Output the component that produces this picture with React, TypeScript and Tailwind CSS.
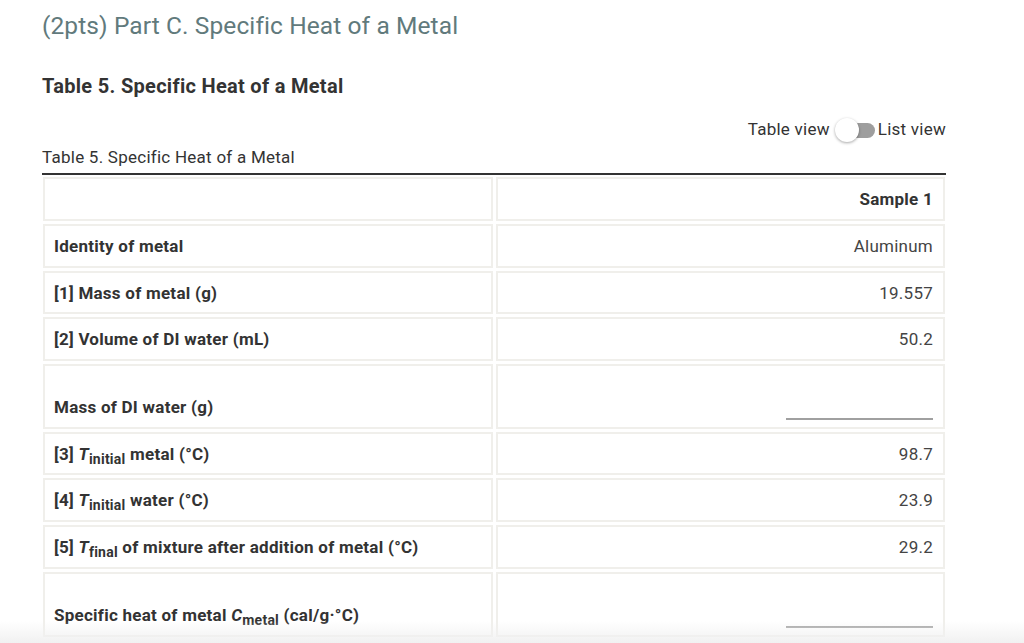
import React from "react";

type Row = {
  label: React.ReactNode;
  value?: string;
  input?: boolean;
  tall?: boolean;
};

function Sub({ sym, sub }: { sym: string; sub: string }) {
  return (
    <span>
      <i>{sym}</i>
      <sub className="text-[14px] relative top-[4px] align-baseline">{sub}</sub>
    </span>
  );
}

const rows: Row[] = [
  { label: "Identity of metal", value: "Aluminum" },
  { label: "[1] Mass of metal (g)", value: "19.557" },
  { label: "[2] Volume of DI water (mL)", value: "50.2" },
  { label: "Mass of DI water (g)", input: true, tall: true },
  {
    label: (
      <>
        [3] <Sub sym="T" sub="initial" /> metal (°C)
      </>
    ),
    value: "98.7",
  },
  {
    label: (
      <>
        [4] <Sub sym="T" sub="initial" /> water (°C)
      </>
    ),
    value: "23.9",
  },
  {
    label: (
      <>
        [5] <Sub sym="T" sub="final" /> of mixture after addition of metal (°C)
      </>
    ),
    value: "29.2",
  },
  {
    label: (
      <>
        Specific heat of metal <Sub sym="C" sub="metal" /> (cal/g·°C)
      </>
    ),
    input: true,
    tall: true,
  },
];

export default function App() {
  return (
    <div
      className="relative w-[1024px] h-[643px] overflow-hidden bg-white text-[#333]"
      style={{ fontFamily: "Roboto, 'Liberation Sans', sans-serif" }}
    >
      <div className="pl-[42px] pr-[78px] pt-[10px]">
        {/* Title */}
        <h1 className="text-[24.5px] leading-[32px] text-[#617a7c] font-normal tracking-[0.1px]">
          (2pts) Part C. Specific Heat of a Metal
        </h1>
        <h2 className="mt-[30px] text-[20px] leading-[28px] font-bold text-[#333] tracking-[0.3px]">
          Table 5. Specific Heat of a Metal
        </h2>

        {/* Toggle */}
        <div className="mt-[18px] flex justify-end items-center text-[17px] tracking-[0.25px] text-[#333] h-[24px]">
          <span>Table view</span>
          <div className="relative ml-[5px] mr-[3px] w-[40px] h-[24px] flex items-center">
            <div className="ml-[10px] w-[30px] h-[15px] rounded-r-full bg-[#9e9e9e]" />
            <div className="absolute left-0 top-0 w-[24px] h-[24px] rounded-full bg-white shadow-[0_1px_3px_rgba(0,0,0,0.35)]" />
          </div>
          <span>List view</span>
        </div>

        {/* Caption */}
        <div className="mt-[4px] text-[17px] tracking-[0.25px] leading-[22px] text-[#333]">
          Table 5. Specific Heat of a Metal
        </div>

        {/* Table */}
        <div className="mt-[5px] border-t-[2px] border-[#333] px-[1px] pt-[2px] flex flex-col gap-[3px]">
          <div className="grid grid-cols-2 gap-[3px] h-[44px]">
            <div className="border-[2px] border-[#f0efeb]" />
            <div className="border-[2px] border-[#f0efeb] flex items-center justify-end pr-[10px] pt-[2px] font-bold text-[17px] tracking-[0.25px]">
              Sample 1
            </div>
          </div>
          {rows.map((r, i) => (
            <div
              key={i}
              className={`grid grid-cols-2 gap-[3px] ${r.tall ? "h-[65px]" : "h-[43.6px]"}`}
            >
              <div
                className={`border-[2px] border-[#f0efeb] flex pl-[9px] font-bold text-[17px] tracking-[0.25px] ${
                  r.tall ? "items-end pb-[6px]" : "items-center pt-[2px]"
                }`}
              >
                <span>{r.label}</span>
              </div>
              <div
                className={`border-[2px] border-[#f0efeb] flex justify-end pr-[10px] text-[17px] tracking-[0.25px] text-[#444] ${
                  r.input ? "items-end pb-[7px]" : "items-center pt-[2px]"
                }`}
              >
                {r.input ? (
                  <div className="w-[147px] h-[2px] bg-[#a0a0a0]" />
                ) : (
                  <span>{r.value}</span>
                )}
              </div>
            </div>
          ))}
        </div>
      </div>

      {/* bottom fade */}
      <div className="pointer-events-none absolute left-0 right-0 bottom-0 h-[22px] bg-gradient-to-b from-transparent to-[#f1f1f1]" />
    </div>
  );
}
